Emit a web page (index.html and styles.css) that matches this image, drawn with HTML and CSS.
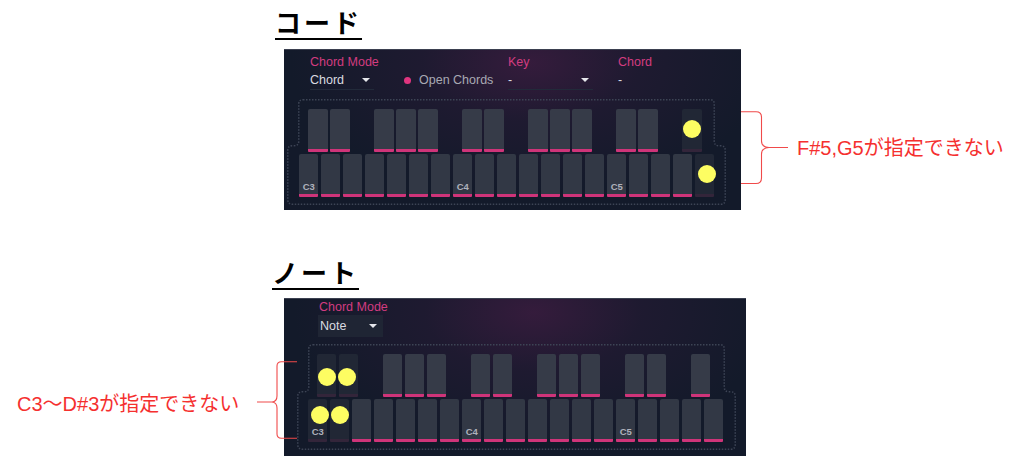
FILE: index.html
```html
<!DOCTYPE html>
<html lang="ja">
<head>
<meta charset="utf-8">
<title>Chord / Note</title>
<link rel="stylesheet" href="styles.css">
</head>
<body>
<section class="block block--chord">
  <h2 class="title title--chord">コード</h2>
  <div class="row">
    <div class="panel panel--chord">
      <div class="head head--chord">
        <div class="col">
          <div class="label">Chord Mode</div>
          <div class="select select--mode"><span>Chord</span><i class="caret"></i></div>
        </div>
        <div class="col">
          <div class="label"></div>
          <div class="toggle"><i class="led"></i><span>Open Chords</span></div>
        </div>
        <div class="col">
          <div class="label">Key</div>
          <div class="select select--key"><span>-</span><i class="caret"></i></div>
        </div>
        <div class="col">
          <div class="label">Chord</div>
          <div class="value">-</div>
        </div>
      </div>
      <div class="keyboard">
        <svg class="outline" viewBox="0 0 439 106" width="439" height="106"><path d="M16,0.75 H423 Q427.25,0.75 427.25,5 V42 Q427.25,46.75 432,46.75 H433.5 Q438.25,46.75 438.25,51.5 V100.5 Q438.25,105.25 433.5,105.25 H5.5 Q0.75,105.25 0.75,100.5 V51.5 Q0.75,46.75 5.5,46.75 H7 Q11.75,46.75 11.75,42 V5 Q11.75,0.75 16,0.75 Z"/></svg>
        <div class="blacks">
          <i class="bk"></i><i class="bk"></i><i class="bk bk--gap"></i>
          <i class="bk"></i><i class="bk"></i><i class="bk"></i><i class="bk bk--gap"></i>
          <i class="bk"></i><i class="bk"></i><i class="bk bk--gap"></i>
          <i class="bk"></i><i class="bk"></i><i class="bk"></i><i class="bk bk--gap"></i>
          <i class="bk"></i><i class="bk"></i><i class="bk bk--gap"></i>
          <i class="bk bk--off"><b class="dot"></b></i>
        </div>
        <div class="whites">
          <i class="wk"><span class="oct">C3</span></i><i class="wk"></i><i class="wk"></i><i class="wk"></i><i class="wk"></i><i class="wk"></i><i class="wk"></i>
          <i class="wk"><span class="oct">C4</span></i><i class="wk"></i><i class="wk"></i><i class="wk"></i><i class="wk"></i><i class="wk"></i><i class="wk"></i>
          <i class="wk"><span class="oct">C5</span></i><i class="wk"></i><i class="wk"></i><i class="wk"></i>
          <i class="wk wk--off"><b class="dot dot--g5"></b></i>
        </div>
      </div>
    </div>
    <div class="note note--right">
      <svg class="brace brace--right" viewBox="0 0 56 74" width="56" height="74"><path d="M0,0.75 H22 Q27.5,0.75 27.5,6 V30 Q27.5,36 35,36.5 H54 M35,36.5 Q27.5,37 27.5,43 V67 Q27.5,72.5 22,72.5 H0"/></svg>
      <p class="note-text">F#5,G5が指定できない</p>
    </div>
  </div>
</section>

<section class="block block--note">
  <h2 class="title title--note">ノート</h2>
  <div class="row">
    <div class="note note--left">
      <p class="note-text note-text--left">C3〜D#3が指定できない</p>
      <svg class="brace brace--left" viewBox="0 0 40 78" width="40" height="78"><path d="M40,0.75 H24.5 Q20,0.75 20,5 V35 Q20,40.5 15,41 H0 M15,41 Q20,41.5 20,47 V73 Q20,77.25 24.5,77.25 H40"/></svg>
    </div>
    <div class="panel panel--note">
      <div class="head head--note">
        <div class="col">
          <div class="label">Chord Mode</div>
          <div class="select select--note"><span>Note</span><i class="caret"></i></div>
        </div>
      </div>
      <div class="keyboard">
        <svg class="outline" viewBox="0 0 439 106" width="439" height="106"><path d="M16,0.75 H423 Q427.25,0.75 427.25,5 V43 Q427.25,47.75 432,47.75 H433.5 Q438.25,47.75 438.25,52.5 V100.5 Q438.25,105.25 433.5,105.25 H5.5 Q0.75,105.25 0.75,100.5 V52.5 Q0.75,47.75 5.5,47.75 H7 Q11.75,47.75 11.75,43 V5 Q11.75,0.75 16,0.75 Z"/></svg>
        <div class="blacks">
          <i class="bk bk--off"><b class="dot dot--cs"></b></i><i class="bk bk--off"><b class="dot dot--ds"></b></i><i class="bk bk--gap"></i>
          <i class="bk"></i><i class="bk"></i><i class="bk"></i><i class="bk bk--gap"></i>
          <i class="bk"></i><i class="bk"></i><i class="bk bk--gap"></i>
          <i class="bk"></i><i class="bk"></i><i class="bk"></i><i class="bk bk--gap"></i>
          <i class="bk"></i><i class="bk"></i><i class="bk bk--gap"></i>
          <i class="bk"></i>
        </div>
        <div class="whites">
          <i class="wk wk--off"><b class="dot dot--c3"></b><span class="oct">C3</span></i><i class="wk wk--off"><b class="dot dot--d3"></b></i><i class="wk"></i><i class="wk"></i><i class="wk"></i><i class="wk"></i><i class="wk"></i>
          <i class="wk"><span class="oct">C4</span></i><i class="wk"></i><i class="wk"></i><i class="wk"></i><i class="wk"></i><i class="wk"></i><i class="wk"></i>
          <i class="wk"><span class="oct">C5</span></i><i class="wk"></i><i class="wk"></i><i class="wk"></i><i class="wk"></i>
        </div>
      </div>
    </div>
  </div>
</section>
</body>
</html>
```

FILE: styles.css
```css
* { box-sizing: border-box; }

html, body {
  margin: 0;
  padding: 0;
  background: #ffffff;
}

body {
  width: 1024px;
  height: 456px;
  overflow: hidden;
  font-family: "Liberation Sans", "Noto Sans CJK JP", sans-serif;
}

.block { display: flex; flex-direction: column; }
.block--note { margin-top: 40px; }

.title {
  margin: 0;
  height: 49px;
  padding-top: 9px;
  font-family: "Noto Sans CJK JP", sans-serif;
  font-size: 26px;
  line-height: 26px;
  font-weight: 700;
  letter-spacing: 3px;
  color: #000;
  text-decoration: underline;
  text-decoration-thickness: 2px;
  text-underline-offset: 5px;
}
.title--chord { margin-left: 275px; }
.title--note { margin-left: 272px; height: 48px; }

.row { display: flex; align-items: flex-start; }

/* ---------- panel ---------- */
.panel {
  position: relative;
  background:
    radial-gradient(ellipse 240px 130px at 54% 8%, rgba(64, 28, 66, 0.75) 0%, rgba(44, 26, 56, 0.45) 45%, rgba(19, 26, 42, 0) 100%),
    #131a2a;
  border-top: 1px solid #3b4050;
  overflow: hidden;
}
.panel--chord { margin-left: 284px; width: 457px; height: 161px; }
.panel--note { width: 462px; height: 170px; margin-left: -13px; }

.head { display: grid; }
.head--chord {
  grid-template-columns: 93px 105px 110px 100px;
  padding: 5px 0 0 26px;
  height: 49px;
}
.head--note {
  grid-template-columns: 100px;
  padding: 1px 0 0 34px;
  height: 45px;
}

.label {
  height: 14px;
  font-size: 12.5px;
  line-height: 14px;
  color: #d23c80;
  white-space: nowrap;
}
.head--note .label { padding-left: 1px; }

.select {
  display: flex;
  align-items: center;
  justify-content: space-between;
  height: 20px;
  margin-top: 1px;
  font-size: 12.5px;
  color: #d9dae0;
  border-bottom: 1px solid #222a3a;
}
.select--mode { width: 64px; padding-right: 4px; }
.select--key { width: 85px; padding-right: 4px; }
.select--note {
  width: 65px;
  height: 22px;
  padding: 0 6px 0 2px;
  background: #1f2534;
  border-bottom: none;
}

.caret {
  width: 0;
  height: 0;
  border-left: 4px solid transparent;
  border-right: 4px solid transparent;
  border-top: 4px solid #e6e7ec;
}

.toggle {
  display: flex;
  align-items: center;
  height: 20px;
  margin-top: 1px;
  font-size: 12.5px;
  color: #a8a9b3;
  white-space: nowrap;
}
.led {
  width: 7px;
  height: 7px;
  margin: 0 8px 0 1px;
  border-radius: 50%;
  background: #e0357f;
}

.value {
  height: 20px;
  margin-top: 1px;
  line-height: 20px;
  font-size: 12.5px;
  color: #d9dae0;
}

/* ---------- keyboard ---------- */
.keyboard {
  position: relative;
  width: 439px;
  height: 106px;
  padding-top: 10px;
}
.panel--chord .keyboard { margin-left: 3px; }
.panel--note .keyboard { margin-left: 13px; }

.outline {
  position: absolute;
  left: 0;
  top: 0;
  fill: none;
  stroke: #3d4455;
  stroke-width: 1.5;
  stroke-dasharray: 1.5 1.5;
}

.blacks, .whites {
  position: relative;
  display: flex;
  gap: 2.5px;
}
.blacks { padding-left: 21px; }
.whites { padding-left: 11.7px; margin-top: 2px; }
.panel--note .blacks { padding-left: 19.7px; }
.panel--note .whites { padding-left: 10.7px; }

.bk, .wk {
  position: relative;
  display: block;
  width: 19.5px;
  height: 43px;
  background: #363b48;
  border-radius: 2px 2px 1px 1px;
  border-bottom: 3px solid #cf3479;
}
.wk { background: #323845; }
.bk--gap { visibility: hidden; }
.bk--off, .wk--off {
  background: #212735;
  border-bottom-color: #33253a;
}

.oct {
  position: absolute;
  left: 4px;
  top: 28px;
  font-size: 9.5px;
  line-height: 10px;
  font-weight: 700;
  font-style: normal;
  color: #aeb1bb;
}

.dot {
  position: absolute;
  left: 50%;
  top: 50%;
  width: 18px;
  height: 18px;
  margin: -9px 0 0 -9px;
  border-radius: 50%;
  background: #fdfd62;
}
.dot--g5 { left: 12.5px; top: 20px; }
.dot--cs { left: 10px; top: 23px; }
.dot--ds { left: 8px; top: 23px; }
.dot--c3 { left: 12.3px; top: 16px; }
.dot--d3 { left: 10px; top: 16px; }

/* ---------- annotations ---------- */
.note { display: flex; align-items: center; }
.note--right {
  margin: 62px 0 0 -7px;
  height: 74px;
  gap: 7px;
}
.note--left {
  width: 297px;
  margin-top: 63px;
  padding-left: 17px;
  height: 78px;
}

.brace {
  flex: none;
  fill: none;
  stroke: #f04a4a;
  stroke-width: 1.1;
}
.brace--left { position: relative; z-index: 2; margin-left: auto; margin-right: 0; }
.note--left + .panel { position: relative; z-index: 1; }

.note-text {
  margin: 0;
  font-family: "Liberation Sans", "Noto Sans CJK JP", sans-serif;
  font-size: 20px;
  line-height: 24px;
  font-weight: 400;
  color: #f5302f;
  white-space: nowrap;
}
.note-text--left { padding-top: 8px; }
```
